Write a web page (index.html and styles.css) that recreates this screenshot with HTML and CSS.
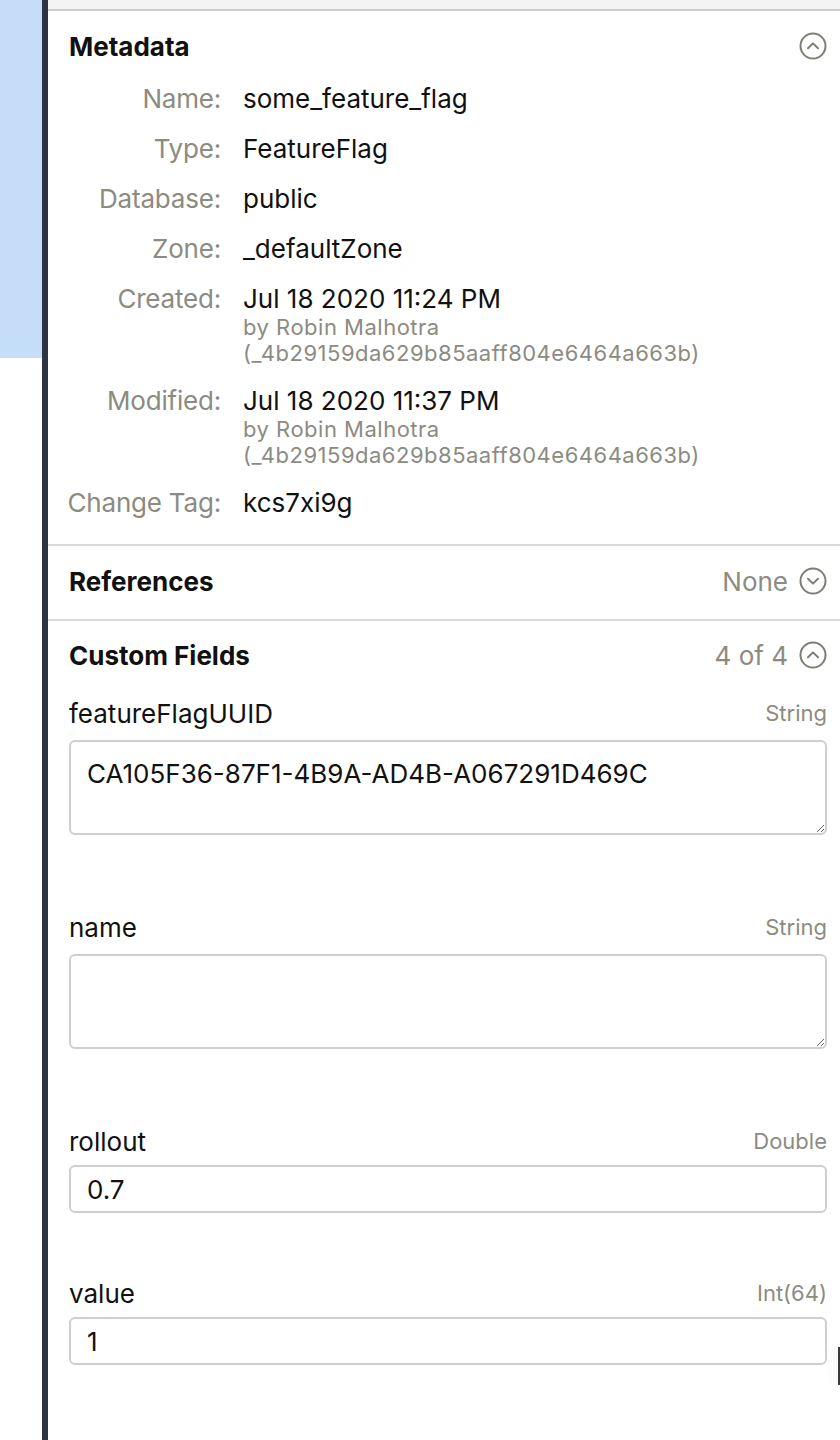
FILE: index.html
```html
<!DOCTYPE html>
<html>
  <head>
    <title>Record Inspector</title>
    <link rel="stylesheet" href="styles.css">
  </head>
  <body>
    <div class="app">
      <aside class="sidebar">
        <div class="sidebar-selection"></div>
      </aside>
      <div class="split"></div>

      <main class="inspector">
        <div class="toolbar"></div>

        <section class="group group-meta">
          <header class="group-header">
            <h2>Metadata</h2>
            <button class="toggle" aria-label="Collapse">
              <svg width="28" height="28" viewBox="0 0 28 28"><circle cx="14" cy="14" r="12.5"/><path d="M9 16.2 14 11.4l5 4.8"/></svg>
            </button>
          </header>
          <dl class="meta">
            <dt>Name:</dt><dd>some_feature_flag</dd>
            <dt>Type:</dt><dd>FeatureFlag</dd>
            <dt>Database:</dt><dd>public</dd>
            <dt>Zone:</dt><dd>_defaultZone</dd>
            <dt>Created:</dt>
            <dd>Jul 18 2020 11:24 PM
              <span class="by">by Robin Malhotra</span>
              <span class="by">(_4b29159da629b85aaff804e6464a663b)</span>
            </dd>
            <dt>Modified:</dt>
            <dd>Jul 18 2020 11:37 PM
              <span class="by">by Robin Malhotra</span>
              <span class="by">(_4b29159da629b85aaff804e6464a663b)</span>
            </dd>
            <dt>Change Tag:</dt><dd>kcs7xi9g</dd>
          </dl>
        </section>

        <section class="group group-refs">
          <header class="group-header">
            <h2>References</h2>
            <span class="count">None</span>
            <button class="toggle" aria-label="Expand">
              <svg width="28" height="28" viewBox="0 0 28 28"><circle cx="14" cy="14" r="12.5"/><path d="M9 11.8 14 16.6l5-4.8"/></svg>
            </button>
          </header>
        </section>

        <section class="group group-fields">
          <header class="group-header">
            <h2>Custom Fields</h2>
            <span class="count">4 of 4</span>
            <button class="toggle" aria-label="Collapse">
              <svg width="28" height="28" viewBox="0 0 28 28"><circle cx="14" cy="14" r="12.5"/><path d="M9 16.2 14 11.4l5 4.8"/></svg>
            </button>
          </header>

          <div class="field field-multiline">
            <div class="field-head"><label>featureFlagUUID</label><span class="field-type">String</span></div>
            <textarea>CA105F36-87F1-4B9A-AD4B-A067291D469C</textarea>
          </div>

          <div class="field field-multiline">
            <div class="field-head"><label>name</label><span class="field-type">String</span></div>
            <textarea></textarea>
          </div>

          <div class="field">
            <div class="field-head"><label>rollout</label><span class="field-type">Double</span></div>
            <input type="text" value="0.7">
          </div>

          <div class="field">
            <div class="field-head"><label>value</label><span class="field-type">Int(64)</span></div>
            <input type="text" value="1">
          </div>
        </section>

        <div class="edge-handle"></div>
      </main>
    </div>
  </body>
</html>
```

FILE: styles.css
```css
body {
  margin: 0;
  font-family: Inter, "Noto Sans", "Liberation Sans", sans-serif;
  color: #111;
  background: #fff;
}

.app {
  display: flex;
  min-height: 1440px;
}

.sidebar {
  width: 42px;
  flex-shrink: 0;
}

.sidebar-selection {
  height: 358px;
  background: #c6ddf9;
}

.split {
  width: 6px;
  flex-shrink: 0;
  background: #2e3542;
}

.inspector {
  flex-grow: 1;
  position: relative;
  overflow: hidden;
}

.toolbar {
  height: 9px;
  background: #f4f4f4;
  border-bottom: 2px solid #cdcdcd;
}

.group {
  padding: 20px 13px 0 21px;
  border-bottom: 2px solid #dadada;
}

.group-meta {
  padding-bottom: 26px;
}

.group-refs {
  padding-bottom: 23px;
}

.group-fields {
  padding-top: 19px;
  border-bottom: none;
}

.group-header {
  display: flex;
  align-items: center;
  height: 30px;
}

.group-header h2 {
  margin: 0;
  flex-grow: 1;
  font-size: 26px;
  font-weight: 700;
}

.count {
  font-size: 26px;
  color: #8c8b81;
  margin-right: 11px;
}

.toggle {
  border: none;
  background: none;
  padding: 0;
  width: 28px;
  height: 28px;
  display: flex;
}

.toggle svg {
  fill: none;
  stroke: #7f7e75;
  stroke-width: 2;
  stroke-linecap: round;
  stroke-linejoin: round;
}

.meta {
  display: grid;
  grid-template-columns: 173px 1fr;
  column-gap: 22px;
  row-gap: 20px;
  margin: 23px 0 0 -21px;
  font-size: 26px;
  line-height: 30px;
}

.meta dt {
  text-align: right;
  white-space: nowrap;
  letter-spacing: -0.2px;
  color: #8c8b81;
}

.meta dd {
  margin: 0;
}

.by {
  display: block;
  font-size: 22px;
  line-height: 26px;
  letter-spacing: 0.5px;
  color: #8c8b81;
}

.field {
  margin-top: 28px;
}

.field + .field {
  margin-top: 65px;
}

.field-multiline + .field {
  margin-top: 77px;
}

.field-head {
  display: flex;
  justify-content: space-between;
  align-items: center;
  height: 30px;
  margin-bottom: 9px;
}

.field-multiline .field-head {
  margin-bottom: 12px;
}

.field-head label {
  font-size: 26px;
}

.field-type {
  font-size: 22px;
  color: #8c8b81;
}

.field textarea,
.field input {
  display: block;
  box-sizing: border-box;
  width: 100%;
  margin: 0;
  border: 2px solid #cfcfcf;
  border-radius: 6px;
  font-family: inherit;
  font-size: 26px;
  color: #111;
  background: #fff;
  outline: none;
}

.field textarea {
  height: 95px;
  padding: 17px 16px 10px;
  line-height: 30px;
  resize: vertical;
}

.field input {
  height: 48px;
  padding: 0 16px;
}

/* neighbouring pane peeking in from the right */
.edge-handle {
  position: absolute;
  right: 0;
  top: 1347px;
  width: 2px;
  height: 38px;
  background: #3a3a3a;
  box-shadow: -4px 0 8px rgba(0, 0, 0, 0.12);
}
```
